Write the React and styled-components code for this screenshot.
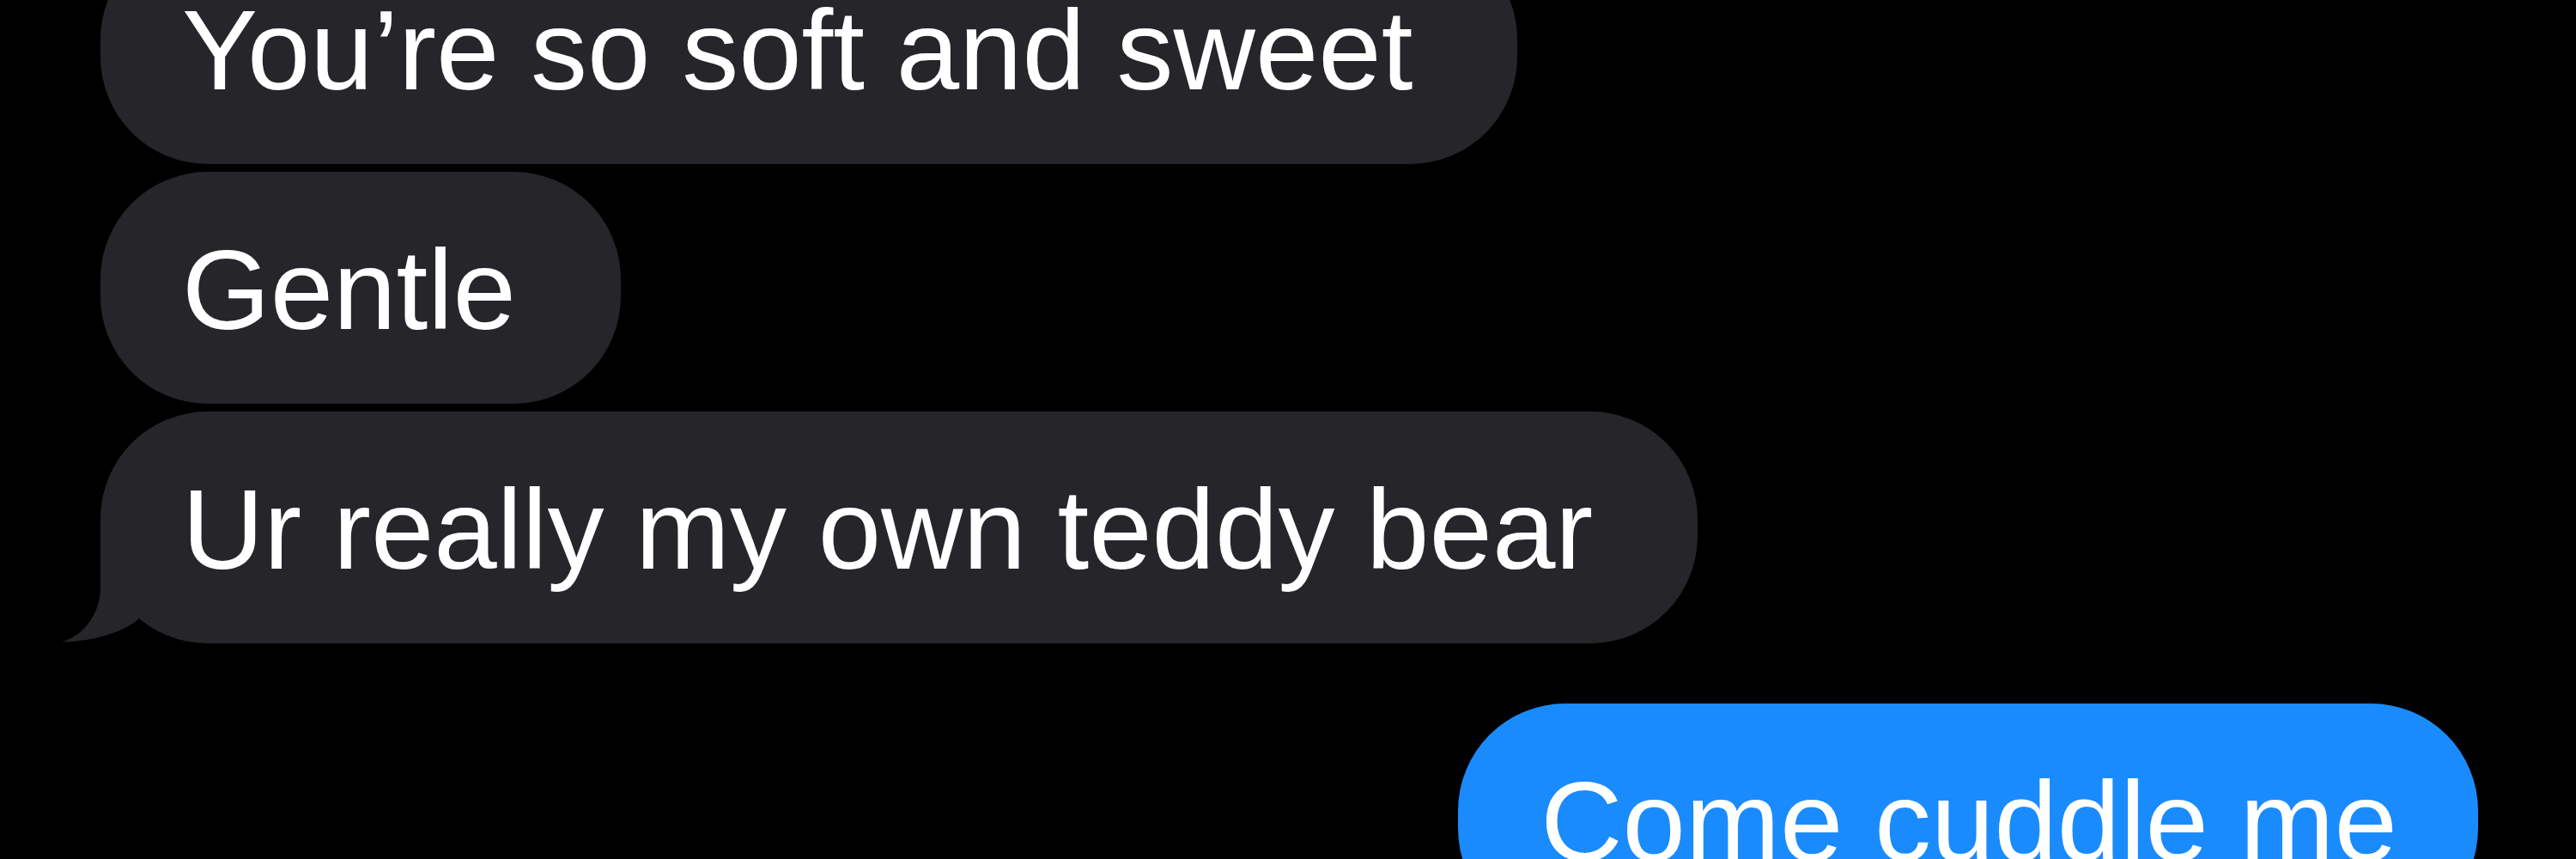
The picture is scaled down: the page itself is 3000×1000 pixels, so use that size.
import React from 'react'
import styled, { createGlobalStyle } from 'styled-components'


const GlobalStyle = createGlobalStyle`
    html, body {
        margin: 0;
        padding: 0;
        background-color: #000000;
        overflow: hidden;
    }
    body {
        width: 3000px;
        height: 1000px;
        font-family: "Liberation Sans", Arial, sans-serif;
    }
`

const StyledThread = styled.div`
    display: flex;
    flex-direction: column;
    margin-top: -79px;
    padding: 0 114px 0 117px;
`

const StyledBubble = styled.div`
    position: relative;
    align-self: ${props => props.$sent ? 'flex-end' : 'flex-start'};
    margin-top: ${props => props.$gap}px;

    background-color: ${props => props.$sent ? '#1a8bfd' : '#262529'};
    color: #ffffff;
    border-radius: 125px;
    padding: ${props => props.$sent ? '59px 94px 53px 96px' : '59px 122px 53px 95px'};

    font-size: 132px;
    line-height: 158px;
    white-space: nowrap;
`

const StyledTail = styled.svg`
    position: absolute;
    left: -45px;
    bottom: 0;
    width: 100px;
    height: 120px;
    fill: #262529;
`


function Tail() {
    return (
        <StyledTail viewBox="0 0 100 120">
            <path d="M45 0 L45 55 C45 85 25 112 0 118 C25 119 70 110 91 90 L91 0 Z" />
        </StyledTail>
    )
}

function Bubble({ sent, gap, tail, children }) {
    return (
        <StyledBubble $sent={sent} $gap={gap}>
            {tail && <Tail />}
            {children}
        </StyledBubble>
    )
}


function App() {
    return (
        <>
            <GlobalStyle />
            <StyledThread>
                <Bubble gap={0}>You’re so soft and sweet</Bubble>
                <Bubble gap={9}>Gentle</Bubble>
                <Bubble gap={9} tail>Ur really my own teddy bear</Bubble>

                <Bubble sent gap={70}>Come cuddle me</Bubble>
            </StyledThread>
        </>
    )
}

export default App
